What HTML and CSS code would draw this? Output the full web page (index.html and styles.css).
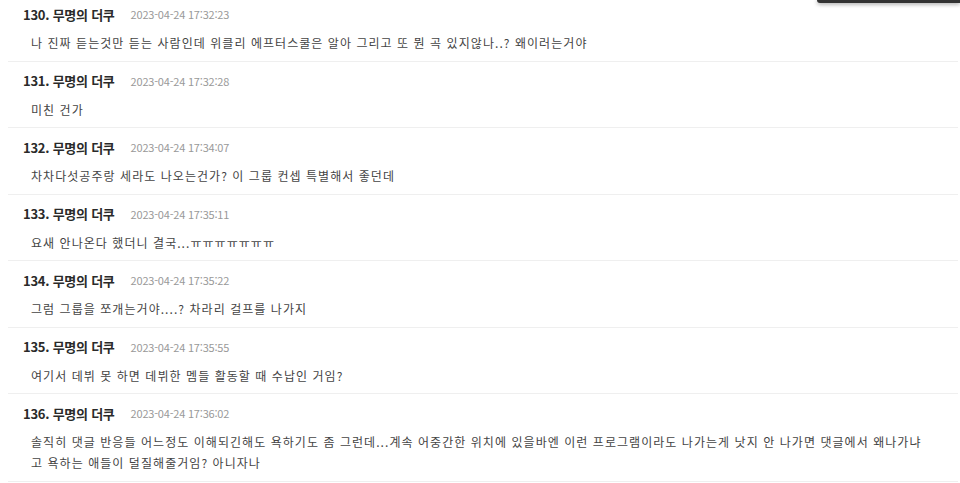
FILE: index.html
```html
<!DOCTYPE html>
<html lang="ko">
<head>
<meta charset="utf-8">
<link rel="stylesheet" href="styles.css">
</head>
<body>
<div class="popup"></div>
<ul class="comments">
  <li class="comment">
    <div class="meta"><span class="name">130. 무명의 더쿠</span><span class="date">2023-04-24 17:32:23</span></div>
    <p class="text">나 진짜 듣는것만 듣는 사람인데 위클리 에프터스쿨은 알아 그리고 또 뭔 곡 있지않나..? 왜이러는거야</p>
  </li>
  <li class="comment">
    <div class="meta"><span class="name">131. 무명의 더쿠</span><span class="date">2023-04-24 17:32:28</span></div>
    <p class="text">미친 건가</p>
  </li>
  <li class="comment">
    <div class="meta"><span class="name">132. 무명의 더쿠</span><span class="date">2023-04-24 17:34:07</span></div>
    <p class="text">차차다섯공주랑 세라도 나오는건가? 이 그룹 컨셉 특별해서 좋던데</p>
  </li>
  <li class="comment">
    <div class="meta"><span class="name">133. 무명의 더쿠</span><span class="date">2023-04-24 17:35:11</span></div>
    <p class="text">요새 안나온다 했더니 결국...ㅠㅠㅠㅠㅠㅠㅠ</p>
  </li>
  <li class="comment">
    <div class="meta"><span class="name">134. 무명의 더쿠</span><span class="date">2023-04-24 17:35:22</span></div>
    <p class="text">그럼 그룹을 쪼개는거야....? 차라리 걸프를 나가지</p>
  </li>
  <li class="comment">
    <div class="meta"><span class="name">135. 무명의 더쿠</span><span class="date">2023-04-24 17:35:55</span></div>
    <p class="text">여기서 데뷔 못 하면 데뷔한 멤들 활동할 때 수납인 거임?</p>
  </li>
  <li class="comment">
    <div class="meta"><span class="name">136. 무명의 더쿠</span><span class="date">2023-04-24 17:36:02</span></div>
    <p class="text">솔직히 댓글 반응들 어느정도 이해되긴해도 욕하기도 좀 그런데...계속 어중간한 위치에 있을바엔 이런 프로그램이라도 나가는게 낫지 안 나가면 댓글에서 왜나가냐 고 욕하는 애들이 덜질해줄거임? 아니자나</p>
  </li>
</ul>
</body>
</html>
```

FILE: styles.css
```css
html, body {
  margin: 0;
  padding: 0;
  background: #fff;
  overflow: hidden;
}
body {
  font-family: "Noto Sans CJK KR", "Noto Sans", sans-serif;
  color: #333;
}
.popup {
  position: fixed;
  top: 0;
  right: 0;
  width: 143px;
  height: 3px;
  background: #333;
  border-bottom-left-radius: 3px;
  box-shadow: 0 1px 4px rgba(0,0,0,0.45);
}
.comments {
  list-style: none;
  margin: -4.67px 2px 0 8px;
  padding: 0;
}
.comment {
  padding: 9px 0 7.5px 15px;
  border-bottom: 1px solid #efefef;
}
.meta {
  display: flex;
  align-items: center;
  gap: 16px;
  height: 20px;
}
.name {
  font-size: 13px;
  font-weight: 700;
  letter-spacing: -0.25px;
  color: #2a2a2a;
}
.date {
  font-size: 11px;
  letter-spacing: -0.2px;
  color: #999;
}
.text {
  margin: 8px 0 0;
  padding: 0 22px 0 8px;
  font-size: 12px;
  letter-spacing: 1.05px;
  line-height: 21px;
  color: #444;
}
```
